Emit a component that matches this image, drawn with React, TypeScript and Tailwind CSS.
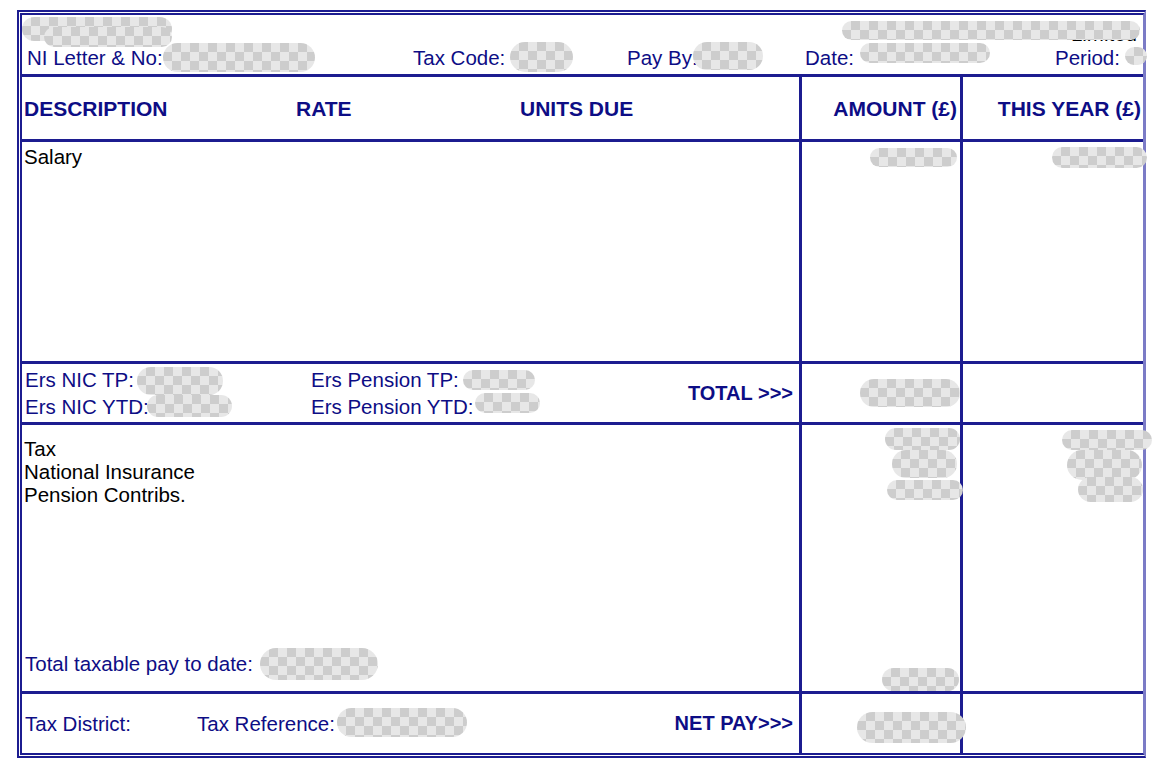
const navy = "text-[#0d0d85]";

function Blot({ className }: { className: string }) {
  return (
    <span
      className={`absolute rounded-full bg-[image:repeating-conic-gradient(#cdcdcd_0_25%,#e7e7e7_0_50%)] bg-[length:18px_18px] blur-[0.6px] ${className}`}
    />
  );
}

function Cell({ className = "", children }: { className?: string; children?: React.ReactNode }) {
  return <div className={`border-l-[3px] border-[#1c1c90] ${className}`}>{children}</div>;
}

export default function App() {
  return (
    <div className="min-h-[766px] bg-white pl-[17px] pt-[10px] font-['Liberation_Sans',Arial,sans-serif] text-[20.5px] leading-[23px]">
      <div className="w-[1129px] border-[5px] border-double border-[#1c1c90] border-r-[3px] border-r-[#7b7bc6] [border-right-style:solid]">
        {/* header */}
        <div className={`relative h-[62px] border-b-[3px] border-[#1c1c90] ${navy}`}>
          <span className="absolute right-[6px] top-[7px] text-black">Limited</span>
          <Blot className="left-0 top-[2px] w-[150px] h-[24px]" />
          <Blot className="left-[22px] top-[12px] w-[128px] h-[20px]" />
          <Blot className="left-[820px] top-[6px] w-[298px] h-[19px]" />
          <Blot className="left-[838px] top-[28px] w-[130px] h-[20px]" />
          <div className="grid h-full grid-cols-[386px_214px_178px_250px_1fr] items-end pl-[5px] pb-[5px]">
            <span>NI Letter &amp; No:</span>
            <span>Tax Code:</span>
            <span>Pay By: D</span>
            <span>Date:</span>
            <span>Period:</span>
          </div>
          <Blot className="left-[141px] top-[28px] w-[152px] h-[29px]" />
          <Blot className="left-[488px] top-[27px] w-[63px] h-[30px]" />
          <Blot className="left-[671px] top-[27px] w-[70px] h-[28px]" />
          <Blot className="left-[1103px] top-[32px] w-[22px] h-[18px]" />
        </div>

        {/* column headings */}
        <div className={`flex h-[65px] border-b-[3px] border-[#1c1c90] text-[21px] font-bold ${navy}`}>
          <div className="grid w-[777px] grid-cols-[272px_224px_1fr] items-center pl-[2px]">
            <span>DESCRIPTION</span>
            <span>RATE</span>
            <span>UNITS DUE</span>
          </div>
          <Cell className="flex w-[161px] items-center justify-end pr-[3px]">AMOUNT (£)</Cell>
          <Cell className="flex flex-1 items-center justify-end pr-[2px]">THIS YEAR (£)</Cell>
        </div>

        {/* earnings */}
        <div className="relative flex h-[222px] border-b-[3px] border-[#1c1c90] text-black">
          <div className="w-[777px] pl-[2px] pt-[3px]">Salary</div>
          <Cell className="w-[161px]" />
          <Cell className="flex-1" />
          <Blot className="left-[848px] top-[6px] w-[87px] h-[19px]" />
          <Blot className="left-[1030px] top-[5px] w-[95px] h-[21px]" />
        </div>

        {/* employer contributions */}
        <div className={`relative flex h-[61px] border-b-[3px] border-[#1c1c90] ${navy}`}>
          <div className="flex w-[777px] items-center pl-[3px] pr-[6px]">
            <div className="grid flex-1 grid-cols-[286px_1fr] leading-[27px]">
              <span>Ers NIC TP:</span>
              <span>Ers Pension TP:</span>
              <span>Ers NIC YTD:</span>
              <span>Ers Pension YTD:</span>
            </div>
            <span className="text-[20px] font-bold">TOTAL &gt;&gt;&gt;</span>
          </div>
          <Cell className="w-[161px]" />
          <Cell className="flex-1" />
          <Blot className="left-[115px] top-[3px] w-[86px] h-[28px]" />
          <Blot className="left-[125px] top-[31px] w-[85px] h-[22px]" />
          <Blot className="left-[441px] top-[6px] w-[72px] h-[20px]" />
          <Blot className="left-[453px] top-[29px] w-[65px] h-[20px]" />
          <Blot className="left-[838px] top-[15px] w-[100px] h-[28px]" />
        </div>

        {/* deductions */}
        <div className="relative flex h-[269px] border-b-[3px] border-[#1c1c90]">
          <div className="flex w-[777px] flex-col pl-[2px] pt-[12px] pb-[16px]">
            <span className="text-black">Tax</span>
            <span className="text-black">National Insurance</span>
            <span className="text-black">Pension Contribs.</span>
            <span className={`mt-auto pl-[1px] ${navy}`}>Total taxable pay to date:</span>
          </div>
          <Cell className="w-[161px]" />
          <Cell className="flex-1" />
          <Blot className="left-[863px] top-[3px] w-[75px] h-[22px]" />
          <Blot className="left-[870px] top-[25px] w-[65px] h-[28px]" />
          <Blot className="left-[865px] top-[55px] w-[76px] h-[20px]" />
          <Blot className="left-[1040px] top-[5px] w-[90px] h-[20px]" />
          <Blot className="left-[1045px] top-[25px] w-[75px] h-[30px]" />
          <Blot className="left-[1056px] top-[52px] w-[65px] h-[25px]" />
          <Blot className="left-[238px] top-[223px] w-[118px] h-[32px]" />
          <Blot className="left-[860px] top-[243px] w-[77px] h-[23px]" />
        </div>

        {/* footer */}
        <div className={`relative flex h-[59px] ${navy}`}>
          <div className="flex w-[777px] items-center pl-[3px] pr-[6px]">
            <span className="w-[172px]">Tax District:</span>
            <span>Tax Reference:</span>
            <span className="ml-auto text-[20px] font-bold">NET PAY&gt;&gt;&gt;</span>
          </div>
          <Cell className="w-[161px]" />
          <Cell className="flex-1" />
          <Blot className="left-[315px] top-[14px] w-[130px] h-[29px]" />
          <Blot className="left-[835px] top-[18px] w-[109px] h-[31px]" />
        </div>
      </div>
      <div className="pt-[5px] text-[17px] text-[#c4c4cc]">
        Further information about your pay is available from the payroll office.
      </div>
    </div>
  );
}
